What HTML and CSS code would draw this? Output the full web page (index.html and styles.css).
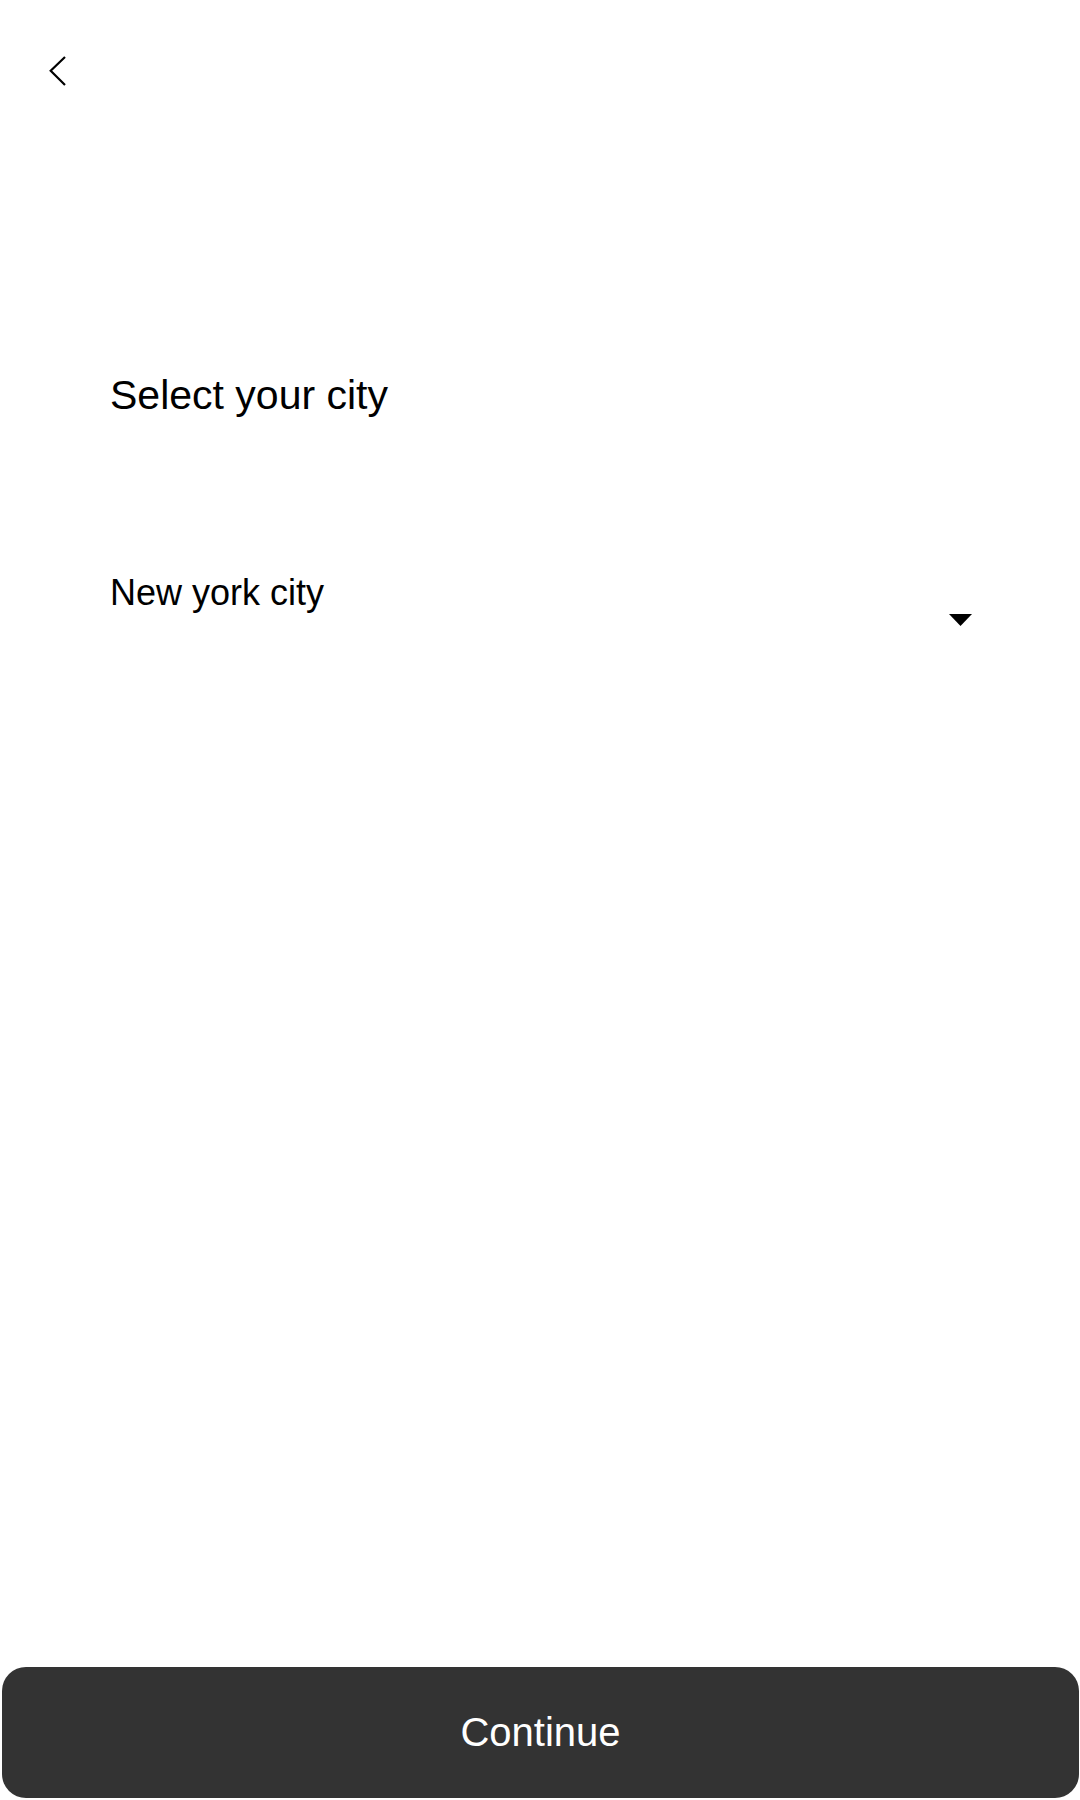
FILE: index.html
```html
<!DOCTYPE html>
<html lang="en">
<head>
<meta charset="utf-8">
<title>Select your city</title>
<link rel="stylesheet" href="styles.css">
</head>
<body>
<div class="screen">
  <header class="header">
    <button class="back" aria-label="Back">
      <svg width="32" height="42" viewBox="0 0 32 42" aria-hidden="true">
        <polyline points="25,7 10.7,20.7 25,35" fill="none" stroke="#000" stroke-width="2.2" stroke-linejoin="miter"/>
      </svg>
    </button>
  </header>
  <h1 class="title">Select your city</h1>
  <div class="select">
    <span class="select-value">New york city</span>
    <svg class="caret" width="23" height="12" viewBox="0 0 23 12" aria-hidden="true">
      <polygon points="0,0 23,0 11.5,12" fill="#000"/>
    </svg>
  </div>
  <div class="spacer"></div>
  <button class="continue">Continue</button>
</div>
</body>
</html>
```
FILE: styles.css
```css
html, body {
  margin: 0;
  padding: 0;
  background: #ffffff;
}
body {
  font-family: "Liberation Sans", Arial, sans-serif;
  color: #000;
}
.screen {
  display: flex;
  flex-direction: column;
  min-height: 1800px;
  box-sizing: border-box;
}
.header {
  padding: 50px 0 0 40px;
  height: 42px;
}
.back {
  display: block;
  padding: 0;
  margin: 0;
  border: 0;
  background: none;
  width: 32px;
  height: 42px;
}
.back svg {
  display: block;
}
.title {
  margin: 280px 0 0 0;
  padding-left: 110px;
  font-size: 41px;
  line-height: 46px;
  font-weight: 400;
}
.select {
  display: flex;
  align-items: flex-start;
  margin-top: 155px;
  padding: 0 108px 0 110px;
}
.select-value {
  font-size: 36px;
  line-height: 40px;
}
.caret {
  display: block;
  margin-left: auto;
  margin-top: 41px;
}
.spacer {
  flex: 1;
}
.continue {
  display: flex;
  align-items: center;
  justify-content: center;
  margin: 0 1px 2px 2px;
  height: 131px;
  border: 0;
  border-radius: 24px;
  background: #333333;
  color: #ffffff;
  font-family: "Liberation Sans", Arial, sans-serif;
  font-size: 40px;
  padding: 0;
}
```
